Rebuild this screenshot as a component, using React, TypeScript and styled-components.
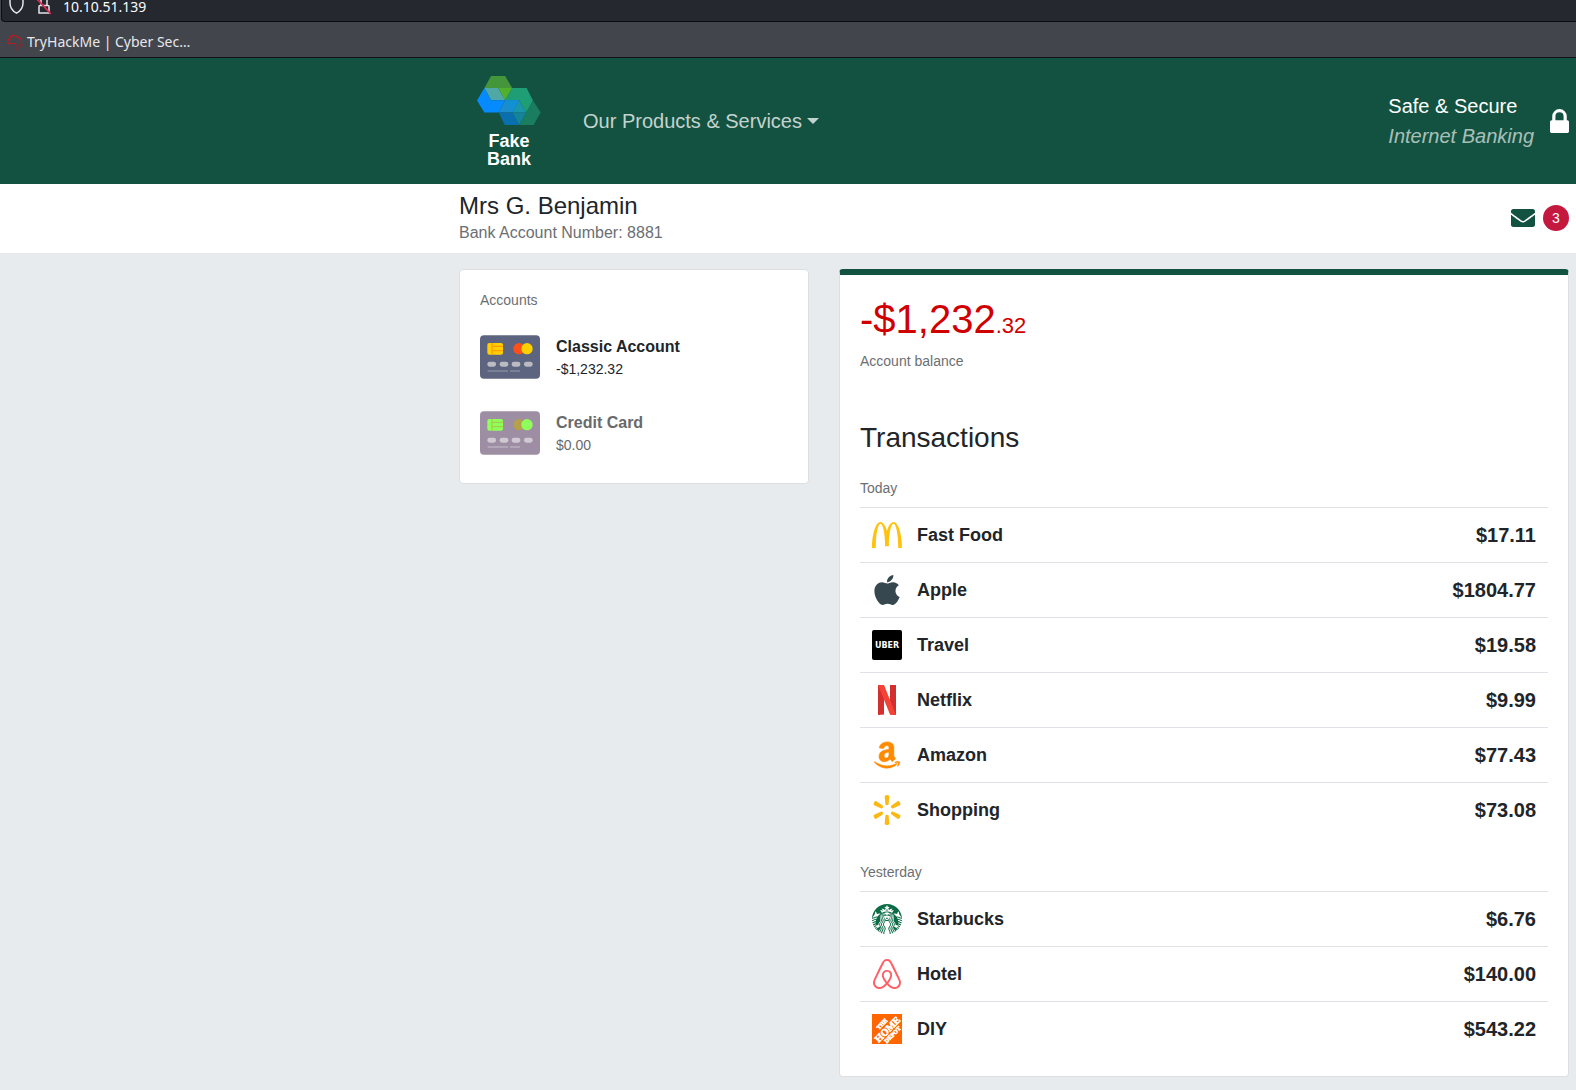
import React from "react";
import styled, { createGlobalStyle } from "styled-components";
import { FaApple, FaAmazon, FaEnvelope } from "react-icons/fa";
import { SiMcdonalds, SiStarbucks, SiAirbnb } from "react-icons/si";

const green = "#135240";
const ink = "#212529";
const muted = "#6b6f73";
const line = "#dee2e6";

const GlobalStyle = createGlobalStyle`
  * { box-sizing: border-box; }
  body {
    margin: 0;
    background: #e7ebee;
    color: ${ink};
    font: 16px/24px "Liberation Sans", Arial, sans-serif;
  }
  h1, h2, h3, p { margin: 0; font-weight: 400; }
  svg { flex: none; }
`;

/* ---------- browser chrome ---------- */

const Chrome = styled.div`
  background: #42454c;
  border-bottom: 1px solid #111217;
  color: #fbfbfe;
  font-family: "Noto Sans", sans-serif;
`;

const AddressBar = styled.label`
  display: flex;
  align-items: flex-start;
  gap: 12px;
  height: 22px;
  margin-left: 1px;
  padding-left: 6px;
  background: #262830;
  border: solid #0c0d12;
  border-width: 0 0 1px 1px;
  border-radius: 0 0 0 4px;
`;

const AddressInput = styled.input`
  flex: 1;
  height: 12px;
  padding: 0;
  border: 0;
  outline: 0;
  background: transparent;
  color: inherit;
  font: 14px/12px "Noto Sans", sans-serif;
`;

const Bookmarks = styled.nav`
  display: flex;
  align-items: center;
  height: 35px;
  padding: 4px 7px 0;
`;

const Bookmark = styled.a`
  display: flex;
  align-items: center;
  gap: 4px;
  color: #e8e8ea;
  font-size: 14px;
  line-height: 20px;
  text-decoration: none;
`;

/* ---------- bank header ---------- */

const Bar = styled.header`
  display: flex;
  align-items: center;
  gap: 24px;
  padding: 16px 7px 16px 459px;
  background: ${green};
`;

const Brand = styled.a`
  display: flex;
  flex-direction: column;
  align-items: center;
  gap: 7px;
  width: 100px;
  padding-top: 2px;
  color: #fff;
  font-size: 18px;
  font-weight: 700;
  line-height: 18px;
  text-align: center;
  text-decoration: none;
`;

const MenuButton = styled.button`
  display: flex;
  align-items: center;
  gap: 5px;
  padding: 0;
  border: 0;
  background: none;
  color: rgba(255, 255, 255, 0.75);
  font: 20px/30px "Liberation Sans", Arial, sans-serif;
`;

const Caret = styled.span`
  border: 6px solid transparent;
  border-top-color: currentColor;
  border-bottom: 0;
`;

const Secure = styled.div`
  display: flex;
  align-items: center;
  gap: 16px;
  margin-left: auto;
  color: #fff;
  font-size: 20px;
  line-height: 30px;
`;

const Tagline = styled.em`
  display: block;
  color: rgba(255, 255, 255, 0.65);
`;

const Customer = styled.section`
  display: flex;
  align-items: center;
  justify-content: space-between;
  padding: 7px 7px 8px 459px;
  background: #fff;
`;

const CustomerName = styled.h1`
  margin-bottom: 1px;
  font-size: 24px;
  line-height: 29px;
`;

const AccountNumber = styled.p`
  color: ${muted};
`;

const Inbox = styled.a`
  display: flex;
  align-items: center;
  gap: 8px;
  color: ${green};
  text-decoration: none;
`;

const Badge = styled.span`
  width: 26px;
  border-radius: 50%;
  background: #c4183f;
  color: #fff;
  font-size: 14px;
  line-height: 26px;
  text-align: center;
`;

/* ---------- content ---------- */

const Content = styled.main`
  display: grid;
  grid-template-columns: minmax(0, 350px) minmax(0, 1fr);
  align-items: start;
  gap: 30px;
  padding: 16px 7px 12px 459px;
`;

const Card = styled.section<{ $accent?: boolean }>`
  padding: 20px;
  background: #fff;
  border: 1px solid #dcdfe1;
  border-radius: 4px;
  ${(p) => p.$accent && `border-top: 6px solid ${green};`}
`;

const Caption = styled.p`
  color: ${muted};
  font-size: 14px;
  line-height: 21px;
`;

const AccountList = styled.ul`
  display: grid;
  gap: 16px;
  margin: 16px 0 0;
  padding: 0;
  list-style: none;
`;

const AccountLink = styled.a<{ $dim?: boolean }>`
  display: flex;
  align-items: center;
  gap: 16px;
  color: ${(p) => (p.$dim ? "#68696b" : ink)};
  text-decoration: none;
`;

const AccountName = styled.strong`
  display: block;
`;

const AccountAmount = styled.span`
  display: block;
  font-size: 14px;
  line-height: 21px;
`;

const Balance = styled.h2`
  margin-bottom: 8px;
  color: #d10000;
  font-size: 40px;
  line-height: 48px;
`;

const Cents = styled.span`
  font-size: 22px;
  line-height: 24px;
`;

const Title = styled.h2`
  margin: 48px 0 22px;
  font-size: 28px;
  line-height: 36px;
`;

const Group = styled.section`
  & + & { margin-top: 25px; }
`;

const Table = styled.table`
  width: 100%;
  margin-top: 8px;
  border-collapse: collapse;
`;

const Cell = styled.td<{ $end?: boolean }>`
  padding: 12px;
  border-top: 1px solid ${line};
  vertical-align: middle;
  font-size: ${(p) => (p.$end ? 20 : 18)}px;
  line-height: 30px;
  font-weight: 700;
  text-align: ${(p) => (p.$end ? "right" : "left")};
`;

const Merchant = styled.span`
  display: flex;
  align-items: center;
  gap: 15px;
`;

/* ---------- drawings ---------- */

const BankLogo = () => (
  <svg width="64" height="49" viewBox="82 48 191 146" aria-hidden="true">
    <path d="M124 48h42l21 36h-83z" fill="#45963b" />
    <path d="M145 84h42l-21 36z" fill="#51b02c" />
    <path d="M104 84h41l21 36h-42z" fill="#4fa8a5" />
    <path d="M104 84l20 36h42l-19 37h-43l-22-36z" fill="#068aff" />
    <path d="M187 84h43l19 37-20 36-21-37h-42z" fill="#1f9e75" />
    <path d="M166 120h42l-20 37h-41z" fill="#1b8dcc" />
    <path d="M208 120l21 37h-41z" fill="#1b95a8" />
    <path d="M166 120h42l-20 37z" fill="#1190d6" />
    <path d="M147 157h41l20 37h-43z" fill="#0a6fae" />
    <path d="M188 157h41l-21 37z" fill="#14839c" />
    <path d="M249 121l23 36-21 37h-43z" fill="#1a7d60" />
  </svg>
);

const LockIcon = () => (
  <svg width="19" height="24" viewBox="0 0 57 72" aria-hidden="true">
    <rect y="34" width="57" height="38" rx="5" fill="#fff" />
    <path d="M11.500 36V22a17 17 0 0 1 34 0v14" fill="none" stroke="#fff" strokeWidth="9.500" />
  </svg>
);

const CardArt = ({ alt }: { alt?: boolean }) => {
  const c = alt
    ? { body: "#9d8ea4", chip: "#8fff5c", bar: "#a4cf46", left: "#b5a04b", right: "#8fff5c", pill: "#d0c9d3", rule: "#b9afbe" }
    : { body: "#5d6480", chip: "#ffcf00", bar: "#ff9a00", left: "#ff5019", right: "#ffd000", pill: "#bbbcc2", rule: "#86899b" };
  return (
    <svg width="60" height="60" viewBox="0 0 180 180" aria-hidden="true">
      <rect y="25" width="180" height="130" rx="12" fill={c.body} />
      <rect x="22" y="48" width="47" height="35" rx="6" fill={c.chip} />
      <path d="M36 48v35M38 58h31M38 71h31" stroke={c.bar} strokeWidth="4" />
      <circle cx="117" cy="65" r="17" fill={c.left} />
      <circle cx="141" cy="65" r="17" fill={c.right} />
      {[22, 59, 95, 132].map((x) => (
        <rect key={x} x={x} y="104" width="26" height="15" rx="7" fill={c.pill} />
      ))}
      <path d="M23 132h61M90 132h30" stroke={c.rule} strokeWidth="5" />
    </svg>
  );
};

const ShieldIcon = () => (
  <svg width="17" height="15" viewBox="0 0 17 15" fill="none" stroke="#e4e4e8" strokeWidth="1.500" aria-hidden="true">
    <path d="M2-3l6.500-1.500L15-3v6c0 4.500-2.500 8-6.500 10.200C4.500 11 2 7.500 2 3z" />
  </svg>
);

const InsecureIcon = () => (
  <svg width="14" height="15" viewBox="0 0 14 15" fill="none" strokeWidth="1.500" aria-hidden="true">
    <path d="M4 5V0M10 5V0M3 5.500h8q1 0 1 1V13H2V6.500q0-1 1-1z" stroke="#e4e4e8" />
    <path d="M0-1L14 14" stroke="#e22850" strokeWidth="1.800" />
  </svg>
);

const CloudIcon = () => (
  <svg width="16" height="16" viewBox="0 0 16 16" fill="none" stroke="#c01820" strokeWidth="1.200" aria-hidden="true">
    <path d="M8 9.500H3C0 9.500 0 5 3 5 3 1 9 0 10.500 3.500c3-.5 4.500 2.500 3.500 4.500" />
    <path d="M8 10.800h3M12 10.800h4M9 13h2M12.500 13H15M8 15.200h3" stroke="#96222a" />
  </svg>
);

const UberIcon = () => (
  <svg width="30" height="30" viewBox="0 0 30 30" aria-hidden="true">
    <rect width="30" height="30" rx="2" />
    <text
      x="15"
      y="18"
      fill="#fff"
      fontSize="8"
      fontWeight="700"
      fontFamily="DejaVu Sans, sans-serif"
      textAnchor="middle"
    >
      UBER
    </text>
  </svg>
);

const NetflixIcon = () => (
  <svg width="30" height="30" viewBox="0 0 30 30" aria-hidden="true">
    <path d="M6 0h6v29.500L6 30zM18 0h6v30l-6-.5z" fill="#d32f2f" />
    <path d="M6 0h6l12 30-6-.5z" fill="#f44336" />
  </svg>
);

const SparkIcon = () => (
  <svg width="30" height="30" viewBox="0 0 30 30" fill="#fdb813" aria-hidden="true">
    {[0, 60, 120, 180, 240, 300].map((a) => (
      <path
        key={a}
        transform={`rotate(${a} 15 15)`}
        d="M12.700 1.500Q12.700 0 15 0t2.300 1.500L16.600 9.300Q16.400 10.200 15 10.200T13.400 9.300z"
      />
    ))}
  </svg>
);

const DepotIcon = () => (
  <svg width="30" height="30" viewBox="0 0 30 30" aria-hidden="true">
    <rect width="30" height="30" fill="#ff6600" />
    <g
      transform="rotate(-45 15 15)"
      fill="#fff"
      fontFamily="Liberation Serif, serif"
      fontWeight="700"
      textAnchor="middle"
      stroke="#fff"
      strokeWidth=".6"
    >
      <text x="15" y="10" fontSize="6">THE</text>
      <text x="15" y="19" fontSize="10">HOME</text>
      <text x="15" y="25" fontSize="6">DEPOT</text>
    </g>
  </svg>
);

/* ---------- data ---------- */

type Row = { icon: React.ReactNode; name: string; amount: string };

const groups: { day: string; rows: Row[] }[] = [
  {
    day: "Today",
    rows: [
      { icon: <SiMcdonalds size={30} color="#ffc20e" />, name: "Fast Food", amount: "$17.11" },
      { icon: <FaApple size={30} viewBox="4 32 376 448" color="#37474f" />, name: "Apple", amount: "$1804.77" },
      { icon: <UberIcon />, name: "Travel", amount: "$19.58" },
      { icon: <NetflixIcon />, name: "Netflix", amount: "$9.99" },
      { icon: <FaAmazon size={30} color="#ff8a00" strokeWidth={10} />, name: "Amazon", amount: "$77.43" },
      { icon: <SparkIcon />, name: "Shopping", amount: "$73.08" },
    ],
  },
  {
    day: "Yesterday",
    rows: [
      { icon: <SiStarbucks size={30} color="#0b6b45" />, name: "Starbucks", amount: "$6.76" },
      { icon: <SiAirbnb size={30} color="#ff5f66" />, name: "Hotel", amount: "$140.00" },
      { icon: <DepotIcon />, name: "DIY", amount: "$543.22" },
    ],
  },
];

export default function App() {
  return (
    <>
      <GlobalStyle />
      <Chrome>
        <AddressBar>
          <ShieldIcon />
          <InsecureIcon />
          <AddressInput aria-label="Address" defaultValue="10.10.51.139" />
        </AddressBar>
        <Bookmarks aria-label="Bookmarks">
          <Bookmark href="#">
            <CloudIcon />
            TryHackMe | Cyber Sec…
          </Bookmark>
        </Bookmarks>
      </Chrome>

      <Bar>
        <Brand href="#">
          <BankLogo />
          <span>
            Fake
            <br />
            Bank
          </span>
        </Brand>
        <MenuButton type="button">
          Our Products &amp; Services
          <Caret />
        </MenuButton>
        <Secure>
          <div>
            Safe &amp; Secure
            <Tagline>Internet Banking</Tagline>
          </div>
          <LockIcon />
        </Secure>
      </Bar>

      <Customer>
        <div>
          <CustomerName>Mrs G. Benjamin</CustomerName>
          <AccountNumber>Bank Account Number: 8881</AccountNumber>
        </div>
        <Inbox href="#" aria-label="Messages">
          <FaEnvelope size={24} />
          <Badge>3</Badge>
        </Inbox>
      </Customer>

      <Content>
        <Card>
          <Caption>Accounts</Caption>
          <AccountList>
            <li>
              <AccountLink href="#">
                <CardArt />
                <span>
                  <AccountName>Classic Account</AccountName>
                  <AccountAmount>-$1,232.32</AccountAmount>
                </span>
              </AccountLink>
            </li>
            <li>
              <AccountLink href="#" $dim>
                <CardArt alt />
                <span>
                  <AccountName>Credit Card</AccountName>
                  <AccountAmount>$0.00</AccountAmount>
                </span>
              </AccountLink>
            </li>
          </AccountList>
        </Card>

        <Card $accent>
          <Balance>
            -$1,232<Cents>.32</Cents>
          </Balance>
          <Caption>Account balance</Caption>
          <Title>Transactions</Title>
          {groups.map((g) => (
            <Group key={g.day}>
              <Caption>{g.day}</Caption>
              <Table>
                <tbody>
                  {g.rows.map((r) => (
                    <tr key={r.name}>
                      <Cell>
                        <Merchant>
                          {r.icon}
                          {r.name}
                        </Merchant>
                      </Cell>
                      <Cell $end>{r.amount}</Cell>
                    </tr>
                  ))}
                </tbody>
              </Table>
            </Group>
          ))}
        </Card>
      </Content>
    </>
  );
}
